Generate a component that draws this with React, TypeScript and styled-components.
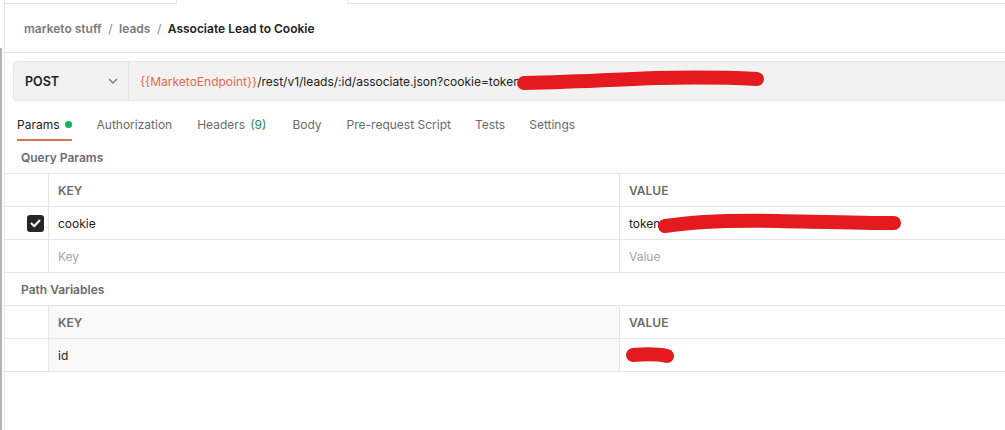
import React from "react";
import styled, { createGlobalStyle } from "styled-components";

const Global = createGlobalStyle`
  html, body { margin: 0; padding: 0; background: #ffffff; }
  body { font-family: Inter, "Noto Sans", sans-serif; color: #212121; }
  * { box-sizing: border-box; }
`;

const Shell = styled.div`
  display: flex;
  width: 1005px;
  height: 430px;
  overflow: hidden;
`;

const Gutter = styled.div`
  width: 4px;
  flex: none;
  display: flex;
  flex-direction: column;
  &::before {
    content: "";
    height: 48px;
    flex: none;
  }
  &::after {
    content: "";
    width: 2px;
    flex: 1;
    background: #b4b4b4;
  }
`;

const Main = styled.div`
  flex: 1;
  min-width: 0;
  border-left: 1px solid #e8e8e8;
  display: flex;
  flex-direction: column;
`;

const TabStrip = styled.div`
  height: 4px;
  display: flex;
`;

const StripFill = styled.div<{ $w?: number }>`
  ${(p) => (p.$w ? `width: ${p.$w}px; flex: none;` : "flex: 1;")}
  border-bottom: 1px solid #e6e6e6;
`;

const StripActive = styled.div`
  width: 172px;
  flex: none;
  border-left: 1px solid #e6e6e6;
  border-right: 1px solid #e6e6e6;
`;

const Breadcrumb = styled.div`
  height: 49px;
  display: flex;
  align-items: center;
  padding: 0 0 0 19px;
  border-bottom: 1px solid #e6e6e6;
  font-size: 12px;
  font-weight: 600;
  gap: 6.5px;
`;

const Crumb = styled.span<{ $current?: boolean }>`
  color: ${(p) => (p.$current ? "#212121" : "#7a7a7a")};
`;

const Slash = styled.span`
  color: #8a8a8a;
  font-weight: 400;
`;

const UrlRow = styled.div`
  padding: 8px 0 0 8px;
`;

const UrlBar = styled.div`
  height: 40px;
  display: flex;
  background: #f2f2f2;
  border: 1px solid #e6e6e6;
  border-right: none;
  border-radius: 4px 0 0 4px;
`;

const Method = styled.div`
  width: 115px;
  flex: none;
  display: flex;
  align-items: center;
  justify-content: space-between;
  padding: 0 10px 0 11px;
  border-right: 1px solid #e2e2e2;
  font-size: 12.5px;
  font-weight: 600;
  color: #212121;
`;

const UrlText = styled.div`
  flex: 1;
  display: flex;
  align-items: center;
  padding-left: 11px;
  font-size: 12px;
  color: #212121;
  white-space: nowrap;
`;

const Variable = styled.span`
  color: #e9674c;
`;

const Redact = styled.svg<{ $shift?: number }>`
  flex: none;
  overflow: visible;
  margin-left: ${(p) => p.$shift ?? 0}px;
`;

const Tabs = styled.div`
  display: flex;
  height: 40px;
  padding: 0 0 0 12px;
`;

const Tab = styled.div<{ $active?: boolean; $after?: number }>`
  display: flex;
  align-items: center;
  gap: 5px;
  padding-top: 8px;
  margin-right: ${(p) => p.$after ?? 25}px;
  font-size: 12px;
  color: ${(p) => (p.$active ? "#212121" : "#6b6b6b")};
  border-bottom: 2px solid ${(p) => (p.$active ? "#dc7350" : "transparent")};
`;

const Dot = styled.span`
  width: 7px;
  height: 7px;
  border-radius: 50%;
  background: #0cb84f;
`;

const Count = styled.span`
  color: #1e8a4a;
`;

const SectionLabel = styled.div`
  height: 32px;
  display: flex;
  align-items: center;
  padding-left: 16px;
  font-size: 12px;
  font-weight: 600;
  color: #6b6b6b;
`;

const Table = styled.div`
  display: grid;
  grid-template-columns: 44px 571px 1fr;
  border-top: 1px solid #e6e6e6;
`;

const Cell = styled.div<{ $head?: boolean; $muted?: boolean; $shade?: boolean }>`
  height: 33px;
  display: flex;
  align-items: center;
  padding-left: 9px;
  border-bottom: 1px solid #e6e6e6;
  border-right: 1px solid #e6e6e6;
  font-size: 12px;
  font-weight: ${(p) => (p.$head ? 600 : 400)};
  color: ${(p) => (p.$head ? "#6b6b6b" : p.$muted ? "#a6a6a6" : "#212121")};
  background: ${(p) => (p.$shade ? "#f9f9f9" : "#ffffff")};
  &:nth-child(3n) {
    border-right: none;
  }
`;

const CheckCell = styled(Cell)`
  justify-content: flex-end;
  padding: 0 4px 0 0;
`;

const Checkbox = styled.span`
  width: 17px;
  height: 17px;
  border-radius: 3px;
  background: #262626;
  display: flex;
  align-items: center;
  justify-content: center;
`;

const Scribble = ({ d, w, h, shift }: { d: string; w: number; h: number; shift?: number }) => (
  <Redact width={w} height={h} $shift={shift} viewBox={`0 0 ${w} ${h}`}>
    <path d={d} stroke="#e31b1e" strokeWidth={14} strokeLinecap="round" strokeLinejoin="round" fill="none" />
  </Redact>
);

const Chevron = () => (
  <svg width="10" height="6" viewBox="0 0 10 6">
    <path d="M1 1 L5 5 L9 1" stroke="#6b6b6b" strokeWidth="1.1" fill="none" />
  </svg>
);

export default function App() {
  return (
    <>
      <Global />
      <Shell>
        <Gutter />
        <Main>
          <TabStrip>
            <StripFill $w={171} />
            <StripActive />
            <StripFill />
          </TabStrip>
          <Breadcrumb>
            <Crumb>marketo stuff</Crumb>
            <Slash>/</Slash>
            <Crumb>leads</Crumb>
            <Slash>/</Slash>
            <Crumb $current>Associate Lead to Cookie</Crumb>
          </Breadcrumb>
          <UrlRow>
            <UrlBar>
              <Method>
                POST
                <Chevron />
              </Method>
              <UrlText>
                <Variable>{"{{MarketoEndpoint}}"}</Variable>/rest/v1/leads/:id/associate.json?cookie=token
                <Scribble
                  w={247}
                  h={17}
                  shift={-3}
                  d="M7 10 C 60 9, 90 7, 140 5 C 190 4, 220 5, 240 6"
                />
              </UrlText>
            </UrlBar>
          </UrlRow>
          <Tabs>
            <Tab $active>
              Params <Dot />
            </Tab>
            <Tab>Authorization</Tab>
            <Tab $after={26}>
              Headers <Count>(9)</Count>
            </Tab>
            <Tab>Body</Tab>
            <Tab $after={24}>Pre-request Script</Tab>
            <Tab $after={24}>Tests</Tab>
            <Tab>Settings</Tab>
          </Tabs>
          <SectionLabel>Query Params</SectionLabel>
          <Table>
            <Cell />
            <Cell $head>KEY</Cell>
            <Cell $head>VALUE</Cell>
            <CheckCell>
              <Checkbox>
                <svg width="11" height="9" viewBox="0 0 11 9">
                  <path d="M1.5 4.5 L4.2 7.2 L9.5 1.5" stroke="#ffffff" strokeWidth="2" fill="none" strokeLinecap="round" strokeLinejoin="round" />
                </svg>
              </Checkbox>
            </CheckCell>
            <Cell>cookie</Cell>
            <Cell>
              token
              <Scribble
                w={243}
                h={19}
                shift={-2}
                d="M7 12 C 40 7, 80 6, 120 7 C 170 8, 210 9, 236 9"
              />
            </Cell>
            <Cell />
            <Cell $muted>Key</Cell>
            <Cell $muted>Value</Cell>
          </Table>
          <SectionLabel>Path Variables</SectionLabel>
          <Table>
            <Cell />
            <Cell $head $shade>KEY</Cell>
            <Cell $head>VALUE</Cell>
            <Cell />
            <Cell $shade>id</Cell>
            <Cell>
              <Scribble w={48} h={17} shift={-3} d="M7 8 C 20 7, 32 7, 41 9" />
            </Cell>
          </Table>
        </Main>
      </Shell>
    </>
  );
}
